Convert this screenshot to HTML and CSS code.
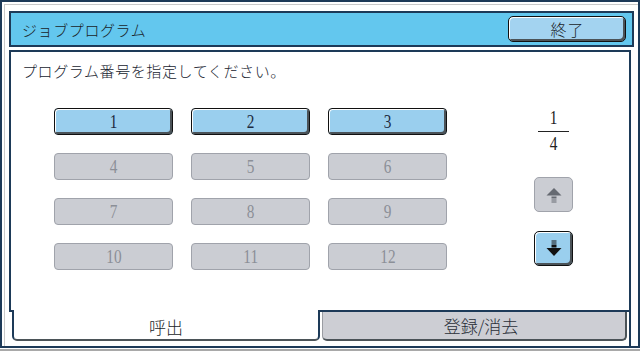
FILE: index.html
```html
<html lang="ja"><head>
  <meta charset="UTF-8">
  <meta name="viewport" content="width=device-width, initial-scale=1.0">
  <title>ジョブプログラム</title>
  <link rel="stylesheet" href="styles.css">
</head>
<body>
  <div class="frame">
    <div class="header">
      <div class="title">ジョブプログラム</div>
      <button class="btn btn-end">終了</button>
    </div>

    <div class="main">
      <div class="content">
        <div class="message">プログラム番号を指定してください。</div>
        <div class="body">
          <div class="grid">
            <button class="key on"><span class="num">1</span></button>
            <button class="key on"><span class="num">2</span></button>
            <button class="key on"><span class="num">3</span></button>
            <button class="key off"><span class="num">4</span></button>
            <button class="key off"><span class="num">5</span></button>
            <button class="key off"><span class="num">6</span></button>
            <button class="key off"><span class="num">7</span></button>
            <button class="key off"><span class="num">8</span></button>
            <button class="key off"><span class="num">9</span></button>
            <button class="key off"><span class="num">10</span></button>
            <button class="key off"><span class="num">11</span></button>
            <button class="key off"><span class="num">12</span></button>
          </div>

          <div class="pager">
            <div class="frac-num"><span class="num">1</span></div>
            <div class="frac-line"></div>
            <div class="frac-den"><span class="num">4</span></div>

            <button class="page-btn off up">
              <svg class="arrow" width="16" height="16" viewBox="0 0 16 16">
                <polygon points="8,1 15.5,8.5 0.5,8.5" fill="#666a72"></polygon>
                <rect x="5.5" y="9.5" width="5" height="2" fill="#666a72"></rect>
                <rect x="5.5" y="12.5" width="5" height="1" fill="#666a72"></rect>
                <rect x="5.5" y="14.5" width="5" height="1" fill="#666a72"></rect>
              </svg>
            </button>
            <button class="page-btn on down">
              <svg class="arrow" width="16" height="17" viewBox="0 0 16 17">
                <rect x="5.5" y="0.5" width="5" height="1" fill="#111"></rect>
                <rect x="5.5" y="2.5" width="5" height="1" fill="#111"></rect>
                <rect x="5.5" y="4.5" width="5" height="3" fill="#111"></rect>
                <polygon points="0.5,8 15.5,8 8,16" fill="#111"></polygon>
              </svg>
            </button>
          </div>
        </div>
      </div>

      <div class="tabs">
        <div class="tab active">呼出</div>
        <div class="tab">登録/消去</div>
      </div>
    </div>
  </div>
</body></html>
```

FILE: styles.css
```css
:root {
  --navy: #1d3a58;
  --header-blue: #63c7ee;
  --key-blue: #9acfee;
  --key-gray: #cbcdd3;
  --key-gray-line: #a0a3ab;
  --shade: #4b5358;
  --text: #1a1e28;
  --text-off: #8b8f97;
}

body {
  margin: 0;
  padding: 0;
  background: #ffffff;
  font-family: "Noto Sans CJK JP", "Liberation Sans", sans-serif;
  font-weight: 300;
  color: var(--text);
}

.frame {
  width: 640px;
  height: 348px;
  box-sizing: border-box;
  border: 2px solid var(--navy);
  padding: 9px 4px 0 7px;
  display: flex;
  flex-direction: column;
  box-shadow: inset 2px 2px 0 #fff, inset 3px 3px 0 #c9c9c9, 0 1px 0 #fff, 0 3px 0 #a9a9a9;
}

.header {
  height: 36px;
  box-sizing: border-box;
  border: 2px solid var(--navy);
  background: var(--header-blue);
  display: flex;
  align-items: center;
  justify-content: space-between;
  padding: 0 6px 0 11px;
}

.title {
  font-size: 15px;
  letter-spacing: 0.6px;
}

.btn {
  font-family: inherit;
  font-weight: inherit;
  color: var(--text);
  cursor: pointer;
}

.btn-end {
  width: 118px;
  height: 26px;
  padding: 0 0 0 1px;
  font-size: 16px;
  letter-spacing: 1px;
  background: #a3d3f0;
  border: 1px solid #111;
  border-radius: 5px;
  box-shadow: inset 1px 1px 0 #fff, inset -2px -2px 0 var(--shade);
}

.main {
  flex: 1;
  margin: 3px 3px 0 0;
  border-right: 2px solid var(--navy);
  display: flex;
  flex-direction: column;
}

.content {
  flex: 1;
  border-left: 2px solid var(--navy);
  border-top: 2px solid var(--navy);
  padding: 10px 0 0 11px;
}

.message {
  font-size: 15px;
  line-height: 18px;
  letter-spacing: 0.6px;
  color: #202430;
}

.body {
  display: flex;
  margin-top: 28px;
  padding-left: 32px;
}

.grid {
  display: grid;
  grid-template-columns: repeat(3, 119px);
  grid-auto-rows: 27px;
  column-gap: 18px;
  row-gap: 18px;
}

.num {
  display: inline-block;
  font-family: "Liberation Serif", serif;
  font-weight: 400;
  font-size: 18px;
  transform: scaleX(0.85);
}

.key {
  box-sizing: border-box;
  padding: 0;
  border-radius: 4px;
  line-height: 20px;
  cursor: pointer;
}

.key.on {
  background: var(--key-blue);
  border: 1px solid #111;
  color: #1c2a3e;
  box-shadow: inset 1px 1px 0 #fff, inset -2px -2px 0 var(--shade);
}

.key.off {
  background: var(--key-gray);
  border: 1px solid var(--key-gray-line);
  color: var(--text-off);
}

.pager {
  width: 39px;
  margin-left: 87px;
  display: flex;
  flex-direction: column;
  align-items: center;
}

.frac-num,
.frac-den {
  line-height: 20px;
  color: #222;
}

.frac-line {
  width: 31px;
  height: 1px;
  background: #222;
  margin-top: 3px;
}

.frac-den {
  margin-top: 2px;
}

.page-btn {
  width: 39px;
  height: 35px;
  box-sizing: border-box;
  padding: 0;
  border-radius: 5px;
  display: flex;
  align-items: center;
  justify-content: center;
  cursor: pointer;
}

.arrow {
  flex: none;
  display: block;
}

.page-btn.off {
  background: var(--key-gray);
  border: 1px solid var(--key-gray-line);
}

.page-btn.on {
  background: var(--key-blue);
  border: 1px solid #111;
  box-shadow: inset 1px 1px 0 #fff, inset -2px -2px 0 var(--shade);
}

.up {
  margin-top: 23px;
}

.down {
  margin-top: 19px;
}

.tabs {
  height: 31px;
  box-sizing: border-box;
  margin-bottom: 5px;
  border-top: 2px solid var(--navy);
  display: flex;
}

.tab {
  box-sizing: border-box;
  font-size: 17px;
  display: flex;
  align-items: center;
  justify-content: center;
  border-radius: 0 0 5px 5px;
  border-bottom: 2px solid var(--shade);
}

.tab.active {
  width: 308px;
  height: 31px;
  margin: -2px 0 0 3px;
  background: #ffffff;
  border-left: 2px solid var(--navy);
  border-right: 2px solid var(--navy);
  padding-top: 3px;
}

.tab:not(.active) {
  flex: 1;
  margin: 0 2px 0 2px;
  padding: 0 0 0 14px;
  background: #cdced4;
  border-left: 1px solid #9a9ca2;
  border-right: 2px solid var(--shade);
  color: #2a2e38;
}
```
